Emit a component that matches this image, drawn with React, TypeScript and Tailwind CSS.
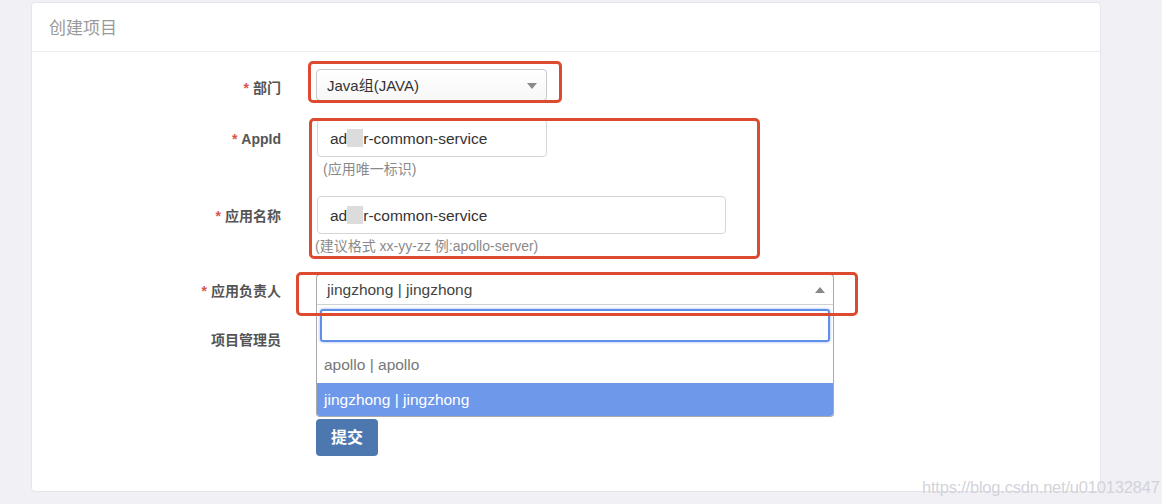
import React from "react";

const font = { fontFamily: '"Liberation Sans", "Noto Sans CJK SC", sans-serif' };

function Label({ text, required = true }: { text: string; required?: boolean }) {
  return (
    <div className="w-[249px] shrink-0 text-right text-[14px] font-bold text-[#555]">
      {required && <span className="text-[#d9534f] mr-[4px]">*</span>}
      {text}
    </div>
  );
}

function Masked() {
  return <span className="inline-block w-[16px] h-[18px] bg-[#dcdcdc] align-middle -mt-[2px]" />;
}

export default function App() {
  return (
    <div
      className="relative w-[1166px] h-[504px] overflow-hidden bg-white"
      style={font}
    >
      <div className="w-[1162px] h-[504px] bg-[#f0f0f5] pt-[2px] pl-[31px]">
        <div className="w-[1070px] h-[490px] bg-white border border-[#e4e4ea] rounded-[4px]">
          <div className="h-[49px] px-[17px] pt-[3px] flex items-center text-[17px] text-[#9a9a9a] border-b border-[#ededf1]">
            创建项目
          </div>

          <div className="relative pt-[17px]">
            {/* 部门 */}
            <div className="flex items-center">
              <div className="pt-[6px]">
                <Label text="部门" />
              </div>
              <div className="ml-[35px] w-[231px] h-[32px] pt-[2px] flex items-center justify-between pl-[10px] pr-[9px] border border-[#c9c9c9] rounded-[4px] bg-gradient-to-b from-white to-[#f7f7f7] shadow-[0_1px_1px_rgba(0,0,0,0.08)] text-[15px] text-[#333]">
                <span>Java组(JAVA)</span>
                <span className="w-0 h-0 border-l-[5px] border-r-[5px] border-t-[6px] border-l-transparent border-r-transparent border-t-[#8a8a8a]" />
              </div>
            </div>

            {/* AppId */}
            <div className="flex mt-[18px]">
              <div className="pt-[10px]">
                <Label text="AppId" />
              </div>
              <div className="ml-[36px] flex flex-col">
                <div className="w-[230px] h-[38px] pt-[2px] flex items-center pl-[12px] border border-[#d6d6d6] rounded-[4px] text-[15.5px] text-[#333]">
                  ad<Masked />r-common-service
                </div>
                <div className="mt-[3px] pl-[6px] text-[14px] text-[#8a8a8a] leading-[18px]">
                  (应用唯一标识)
                </div>
              </div>
            </div>

            {/* 应用名称 */}
            <div className="flex mt-[18px]">
              <div className="pt-[10px]">
                <Label text="应用名称" />
              </div>
              <div className="ml-[36px] flex flex-col">
                <div className="w-[409px] h-[38px] pt-[2px] flex items-center pl-[12px] border border-[#d6d6d6] rounded-[4px] text-[15.5px] text-[#333]">
                  ad<Masked />r-common-service
                </div>
                <div className="mt-[3px] -ml-[2px] text-[14px] text-[#8a8a8a] leading-[18px]">
                  (建议格式 xx-yy-zz 例:apollo-server)
                </div>
              </div>
            </div>

            {/* 应用负责人 */}
            <div className="flex items-center mt-[19px]">
              <div className="pt-[3px]">
                <Label text="应用负责人" />
              </div>
              <div className="relative ml-[35px] w-[518px]">
                <div className="h-[31px] flex items-center justify-between pl-[10px] pr-[8px] border border-[#aaa] border-b-[#d0d0d0] rounded-t-[4px] text-[15.5px] text-[#444] bg-white">
                  <span>jingzhong | jingzhong</span>
                  <span className="w-0 h-0 border-l-[5px] border-r-[5px] border-b-[6px] border-l-transparent border-r-transparent border-b-[#888]" />
                </div>
                {/* dropdown */}
                <div className="absolute left-0 top-[31px] w-[518px] bg-white border border-t-0 border-[#aaa] rounded-b-[4px] z-10">
                  <div className="px-[3px] pt-[4px] pb-[3px]">
                    <div className="h-[33px] rounded-[3px] border-2 border-[#5f8fe6] shadow-[0_0_3px_rgba(80,130,230,0.6)]" />
                  </div>
                  <div className="h-[38px] pt-[2px] flex items-center pl-[7px] text-[15.5px] text-[#777]">
                    apollo | apollo
                  </div>
                  <div className="h-[33px] flex items-center pl-[7px] text-[15.5px] text-white bg-[#6e98e9] rounded-b-[3px]">
                    jingzhong | jingzhong
                  </div>
                </div>
              </div>
            </div>

            {/* 项目管理员 */}
            <div className="flex items-center mt-[25px]">
              <Label text="项目管理员" required={false} />
            </div>

            <div className="ml-[284px] mt-[68px]">
              <button className="w-[62px] h-[37px] rounded-[4px] bg-[#4d78af] text-white text-[16px] font-bold">
                提交
              </button>
            </div>
          </div>
        </div>
      </div>

      {/* annotation boxes */}
      <div className="absolute left-[308px] top-[61px] w-[254px] h-[42px] border-[3px] border-[#dc4a2f] rounded-[5px]" />
      <div className="absolute left-[309px] top-[118px] w-[451px] h-[141px] border-[3px] border-[#dc4a2f] rounded-[5px]" />
      <div className="absolute left-[296px] top-[272px] w-[562px] h-[44px] border-[3px] border-[#dc4a2f] rounded-[5px] z-20" />

      <div className="absolute left-[922px] top-[475px] text-[16.5px] tracking-[-0.2px] text-[#d3d3db]">
        https://blog.csdn.net/u010132847
      </div>
    </div>
  );
}
